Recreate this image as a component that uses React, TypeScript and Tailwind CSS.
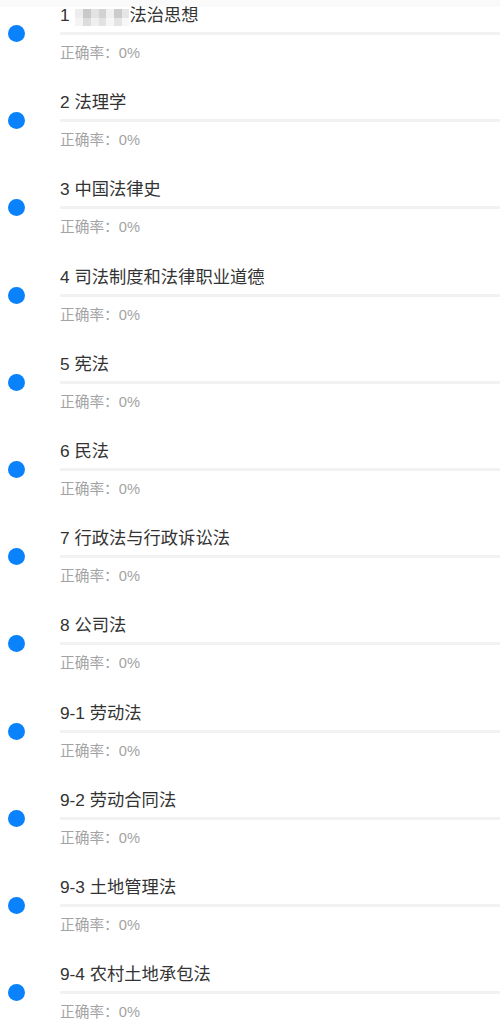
const chapters = [
  '1',
  '2 法理学',
  '3 中国法律史',
  '4 司法制度和法律职业道德',
  '5 宪法',
  '6 民法',
  '7 行政法与行政诉讼法',
  '8 公司法',
  '9-1 劳动法',
  '9-2 劳动合同法',
  '9-3 土地管理法',
  '9-4 农村土地承包法',
];

// pixelated privacy blur over part of the first title
function Mosaic() {
  const cells = [
    '#ededed', '#c9c9c9', '#e3e3e3', '#d2d2d2', '#f0f0f0', '#cbcbcb', '#e6e6e6',
    '#f4f4f4', '#dcdcdc', '#efefef', '#e2e2e2', '#f6f6f6', '#e4e4e4', '#f7f7f7',
  ];
  return (
    <span className="inline-grid grid-cols-7 w-[54px] h-[17px] align-top translate-y-[5px] ml-[1px]">
      {cells.map((c, i) => (
        <span key={i} style={{ background: c }} />
      ))}
    </span>
  );
}

function ChapterRow({ title, first }: { title: string; first?: boolean }) {
  return (
    <div className="flex h-[87.2px]">
      <div className="w-[60px] flex-shrink-0 pt-[21px] pl-[8px]">
        <div className="h-[17px] w-[17px] rounded-full bg-[#0a82fb]"></div>
      </div>
      <div className="flex-1 min-w-0">
        <div className="h-[22px] text-[17.3px] leading-[22px] text-[#333333] whitespace-nowrap">
          {first ? (
            <>
              1 <Mosaic />法治思想
            </>
          ) : (
            title
          )}
        </div>
        <div className="mt-[6px] h-[3px] bg-[#f2f2f2]"></div>
        <div className="mt-[8px] text-[14.7px] leading-[20px] text-[#a3a3a3]">正确率：0%</div>
      </div>
    </div>
  );
}

export default function App() {
  return (
    <div
      className="w-[500px] h-[1025px] overflow-hidden bg-white"
      style={{ fontFamily: '"Liberation Sans", "Noto Sans CJK SC", sans-serif' }}
    >
      <div className="h-[7px] bg-[#fafafa]"></div>
      <div className="-mt-[3px]">
        {chapters.map((t, i) => (
          <ChapterRow key={i} title={t} first={i === 0} />
        ))}
      </div>
    </div>
  );
}
